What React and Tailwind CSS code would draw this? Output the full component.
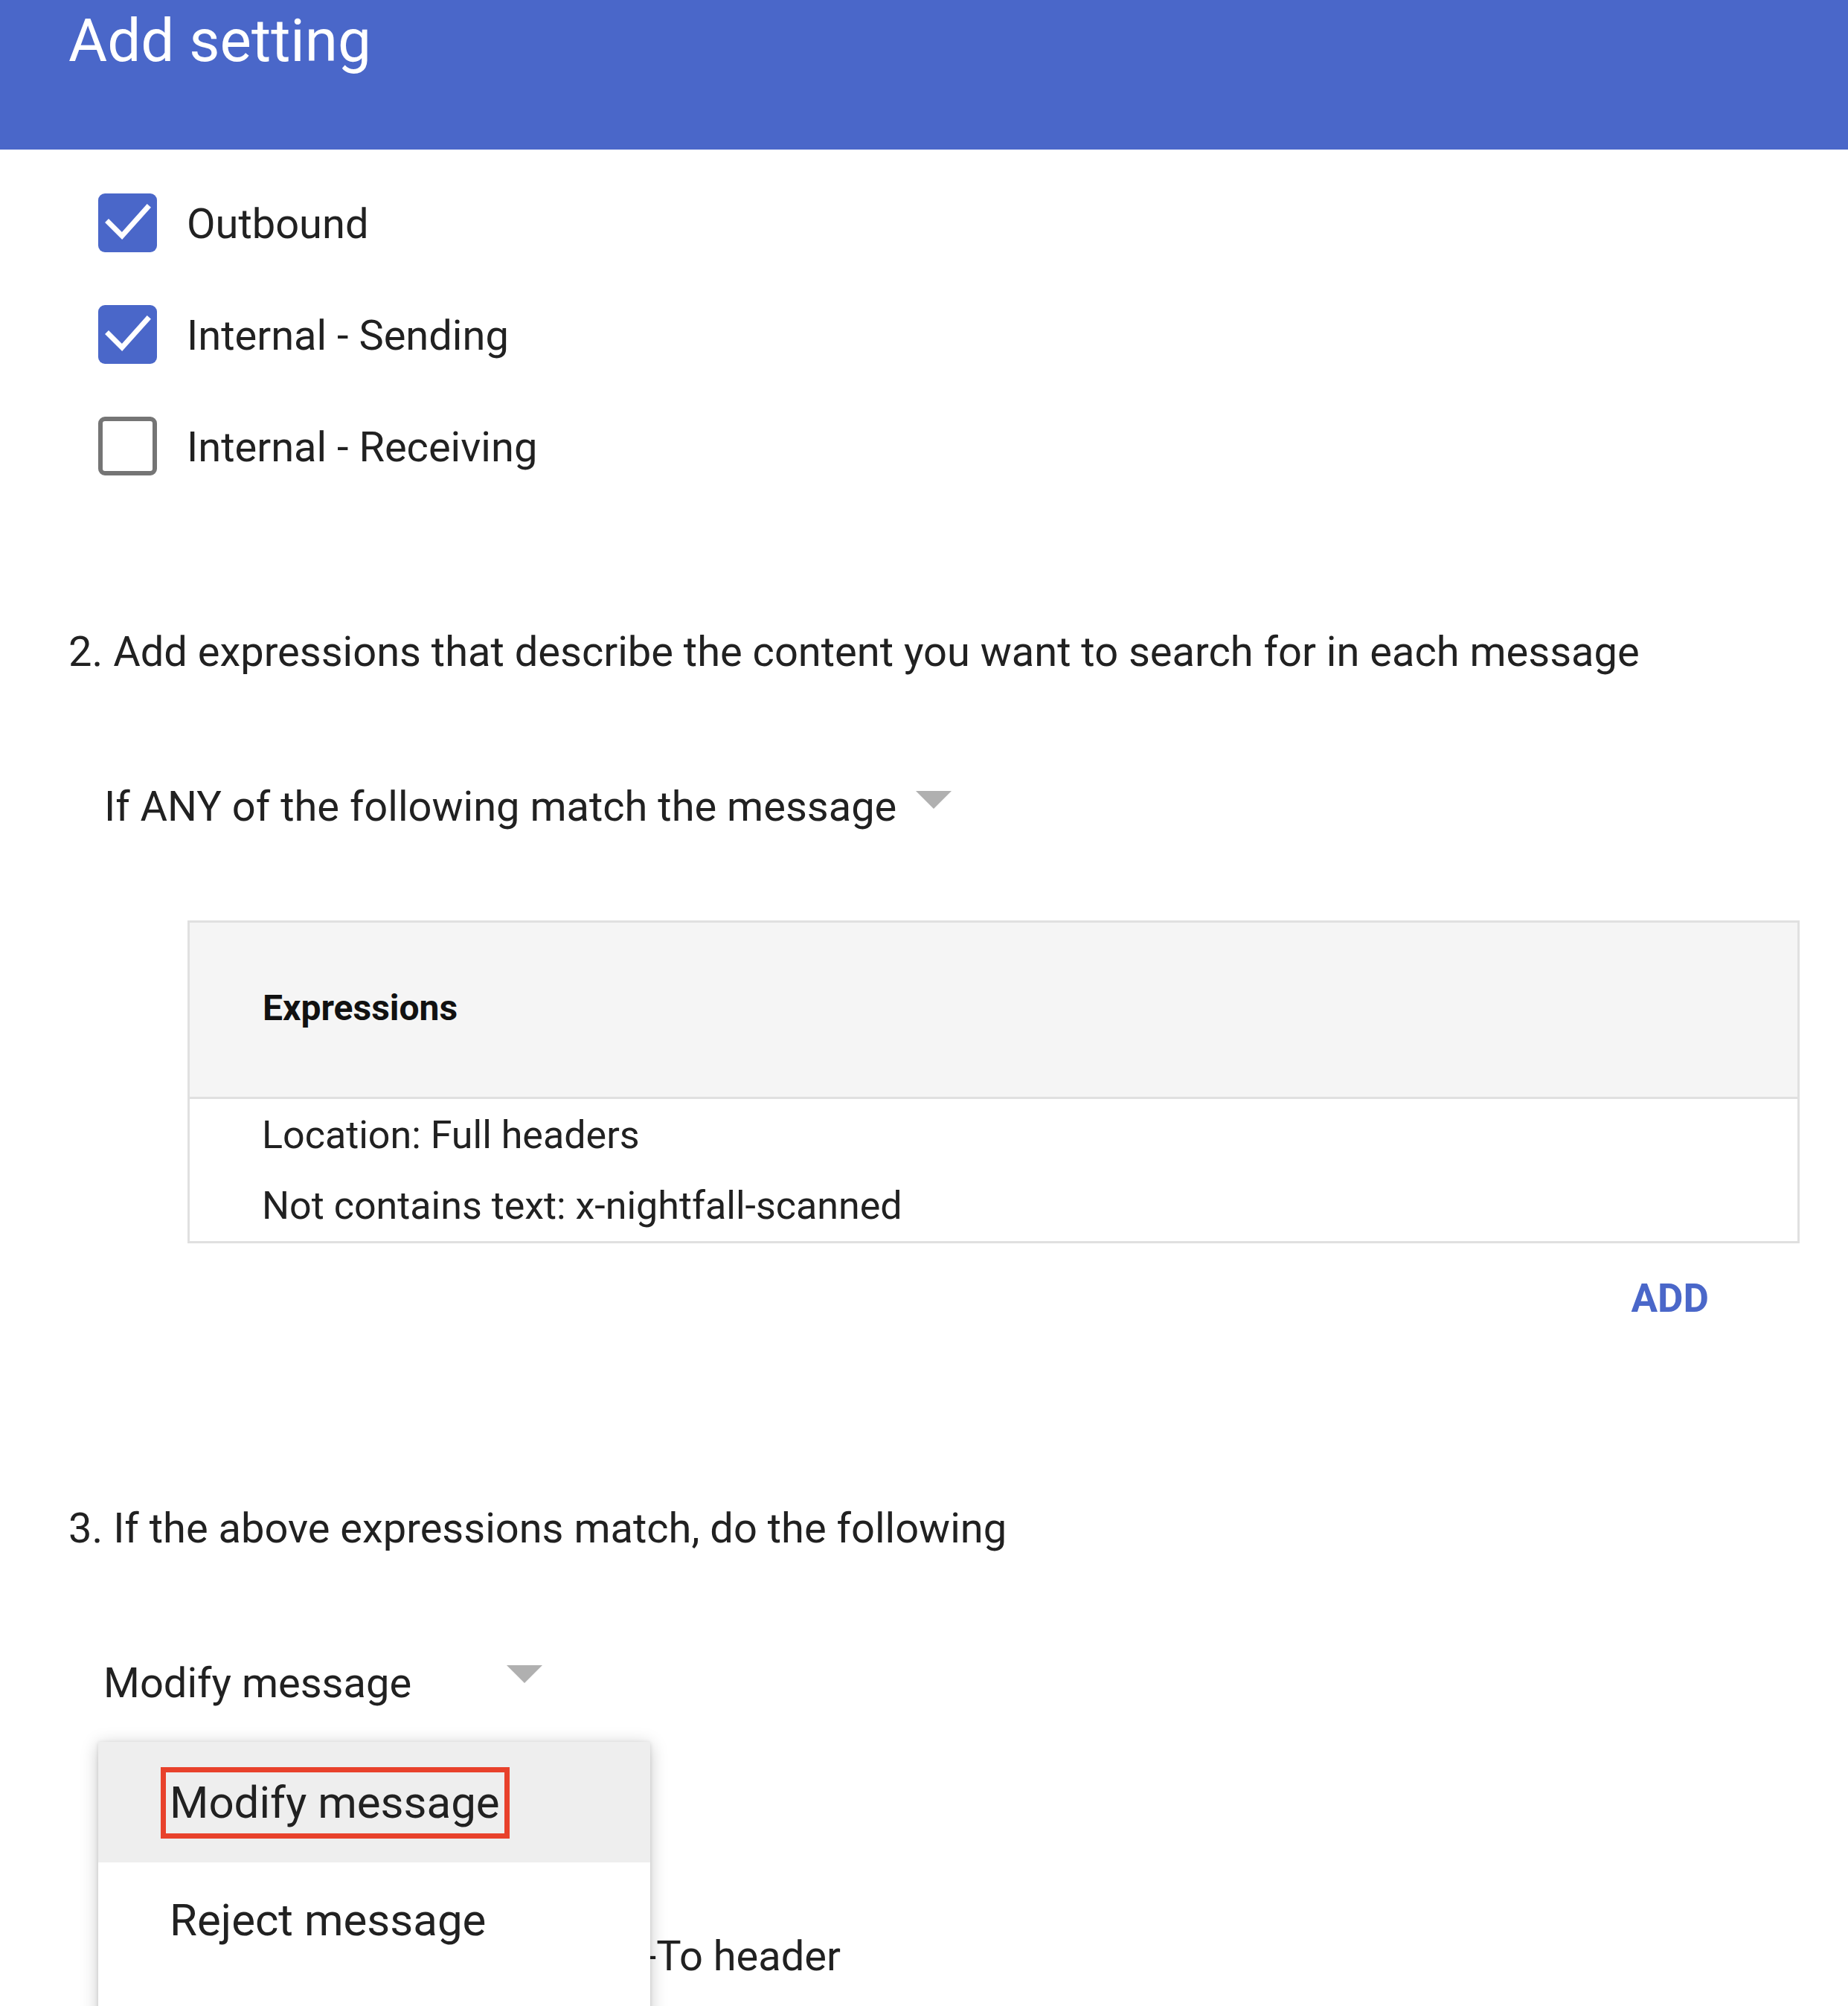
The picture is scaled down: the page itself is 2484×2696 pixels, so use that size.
import React from "react";

function Check() {
  return (
    <svg viewBox="0 0 79 79" className="w-[79px] h-[79px]">
      <polyline points="14,39 32,57 66,19" fill="none" stroke="#ffffff" strokeWidth="7" strokeLinecap="square" />
    </svg>
  );
}

function CheckRow({ checked, label }) {
  return (
    <div className="flex items-center h-[79px] pl-[132px]">
      {checked ? (
        <div className="w-[79px] h-[79px] rounded-[9px] bg-[#4a67c9] shrink-0">
          <Check />
        </div>
      ) : (
        <div className="w-[79px] h-[79px] rounded-[9px] border-[6px] border-[#757575] bg-white shrink-0" />
      )}
      <span className="ml-[40px] text-[56px] leading-[79px] pt-[3px] text-[#212121]">{label}</span>
    </div>
  );
}

function Caret() {
  return (
    <svg viewBox="0 0 48 24" className="w-[48px] h-[24px] shrink-0">
      <polygon points="0,0 48,0 24,24" fill="#b0b0b0" />
    </svg>
  );
}

export default function App() {
  return (
    <div className="relative w-[2484px] h-[2696px] overflow-hidden bg-white font-[Roboto,sans-serif] text-[#212121]">
      <div className="h-[201px] bg-[#4a67c9] pl-[92px] pt-[16px]">
        <div className="text-[80px] leading-[79px] text-white">Add setting</div>
      </div>

      <div className="flex flex-col gap-[71px] pt-[59px]">
        <CheckRow checked label="Outbound" />
        <CheckRow checked label="Internal - Sending" />
        <CheckRow checked={false} label="Internal - Receiving" />
      </div>

      <div className="mt-[204px] pl-[92px] text-[56px] leading-[66px]">
        2. Add expressions that describe the content you want to search for in each message
      </div>

      <div className="mt-[142px] pl-[140px] flex items-start">
        <span className="text-[56px] leading-[66px]">If ANY of the following match the message</span>
        <div className="ml-[26px] mt-[12px]">
          <Caret />
        </div>
      </div>

      <div className="mt-[120px] ml-[252px] w-[2167px] border-[3px] border-[#e0e0e0]">
        <div className="h-[237px] bg-[#f5f5f5] border-b-[3px] border-[#e0e0e0] pl-[98px] pt-[85px]">
          <div className="text-[48px] leading-[60px] font-bold text-[#111111]">Expressions</div>
        </div>
        <div className="pl-[97px] pt-[1px] text-[52px] leading-[95px]">
          <div>Location: Full headers</div>
          <div>Not contains text: x-nightfall-scanned</div>
        </div>
      </div>

      <div className="ml-[252px] w-[2167px] mt-[44px] flex justify-end pr-[122px]">
        <span className="text-[53px] leading-[60px] font-bold text-[#4a67c9]">ADD</span>
      </div>

      <div className="mt-[246px] pl-[92px] text-[56px] leading-[66px]">
        3. If the above expressions match, do the following
      </div>

      <div className="relative mt-[142px] ml-[139px] w-[590px] flex items-start justify-between">
        <span className="text-[56px] leading-[66px]">Modify message</span>
        <div className="mt-[9px]">
          <Caret />
        </div>

        <div className="absolute z-10 left-[-7px] top-[112px] w-[742px] h-[600px] bg-white shadow-[0_4px_22px_rgba(0,0,0,0.22),0_1px_5px_rgba(0,0,0,0.12)]">
          <div className="h-[162px] bg-[#eeeeee] pl-[84px] pt-[34px]">
            <div className="inline-block border-[7px] border-[#e8412b] pl-[5px] pr-[6px]">
              <span className="block text-[60px] leading-[82px] text-[#212121]">Modify message</span>
            </div>
          </div>
          <div className="pl-[96px] pt-[37px]">
            <span className="block text-[60px] leading-[82px] text-[#212121]">Reject message</span>
          </div>
        </div>
      </div>

      <div className="mt-[301px] w-[1130px] text-right text-[56px] leading-[66px] whitespace-nowrap">
        Add X-Gm-Original-To header
      </div>
    </div>
  );
}
